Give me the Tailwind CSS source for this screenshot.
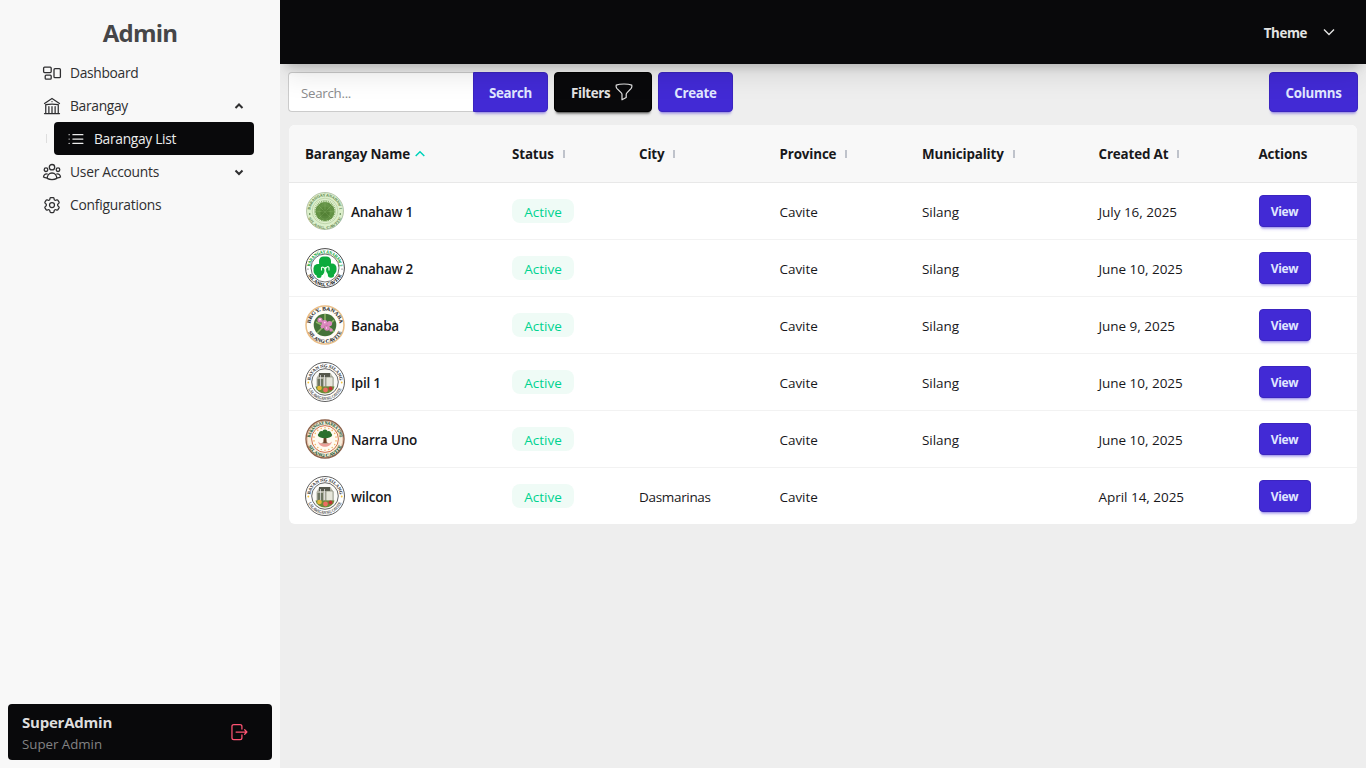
<!DOCTYPE html>
<html lang="en">
<head>
<meta charset="utf-8">
<title>Admin</title>
<script src="https://cdn.jsdelivr.net/npm/@tailwindcss/browser@4"></script>
</head>
<body class="flex h-screen overflow-hidden bg-[#eeeeee] font-['Open_Sans',sans-serif] text-sm text-[#18181b]">

<!-- Sidebar -->
<aside class="relative z-20 flex w-70 shrink-0 flex-col bg-[#f8f8f8] p-2">
  <h1 class="mt-2 text-center text-[24px] leading-[34px] font-bold tracking-[-0.8px] text-[#464648]">Admin</h1>
  <nav class="mt-[6px] ml-[22px] flex w-[224px] flex-col text-[13.800px] text-[#2f2f31]">
    <a class="flex h-[33px] items-center gap-2 px-3">
      <svg class="size-5" viewBox="0 0 20 20" fill="none" stroke="currentColor" stroke-width="1.3"><rect x="1.6" y="4.200" width="7.6" height="5.4" rx="1"/><rect x="3.2" y="12.200" width="6" height="4" rx="1"/><rect x="12" y="5.7" width="6.4" height="9" rx="1"/></svg>
      <span class="tracking-[-0.310px]">Dashboard</span>
    </a>
    <a class="flex h-[33px] items-center gap-2 px-3">
      <svg class="size-5" viewBox="0 0 24 24" fill="none" stroke="currentColor" stroke-width="1.5" stroke-linecap="round" stroke-linejoin="round"><path d="M12 21v-8.25M15.75 21v-8.25M8.25 21v-8.25M3 9l9-6 9 6m-1.500 12V10.332A48.36 48.36 0 0 0 12 9.75c-2.551 0-5.056.2-7.500.582V21M3 21h18M12 6.750h.008v.008H12V6.75Z"/></svg>
      <span class="grow tracking-[-0.310px]">Barangay</span>
      <svg class="mr-[-3px] size-3" viewBox="0 0 12 12" fill="none" stroke="currentColor" stroke-width="2"><path d="M2.500 8L6 4.500 9.500 8"/></svg>
    </a>
    <div class="flex h-[33px] items-center">
      <i class="ml-4 h-[9px] w-px bg-[#dedede]"></i>
      <a class="ml-[7px] flex h-[33px] w-[200px] items-center gap-2 rounded bg-[#09090b] px-3 text-[#ececec]">
        <svg class="size-5" viewBox="0 0 24 24" fill="none" stroke="currentColor" stroke-width="1.5" stroke-linecap="round" stroke-linejoin="round"><path d="M8.250 6.750h12M8.250 12h12m-12 5.250h12M3.750 6.750h.007v.008H3.750V6.750Zm0 5.250h.007v.008H3.750V12Zm0 5.250h.007v.008H3.750v-.008Z"/></svg>
        <span class="tracking-[-0.310px]">Barangay List</span>
      </a>
    </div>
    <a class="flex h-[33px] items-center gap-2 px-3">
      <svg class="size-5" viewBox="0 0 20 20" fill="none" stroke="currentColor" stroke-width="1.3"><circle cx="10" cy="5.200" r="2.700"/><circle cx="4" cy="7.700" r="1.800"/><circle cx="16" cy="7.700" r="1.800"/><path d="M5.200 16.400c0-3 1.800-5.400 4.800-5.400s4.800 2.400 4.800 5.400c-2.600 1.600-7 1.600-9.600 0ZM5.600 12.200c-2.300-.8-3.900.5-4.100 2.800.9.600 2.200.9 3.600.8M14.400 12.200c2.300-.8 3.900.5 4.100 2.800-.9.600-2.200.9-3.600.8"/></svg>
      <span class="grow tracking-[-0.250px]">User Accounts</span>
      <svg class="mr-[-3px] size-3" viewBox="0 0 12 12" fill="none" stroke="currentColor" stroke-width="2"><path d="M2.500 4.500L6 8l3.500-3.500"/></svg>
    </a>
    <a class="flex h-[33px] items-center gap-2 px-3">
      <svg class="size-5" viewBox="0 0 24 24" fill="none" stroke="currentColor" stroke-width="1.5" stroke-linecap="round" stroke-linejoin="round"><path d="M9.594 3.940c.090-.542.560-.940 1.110-.940h2.593c.550 0 1.020.398 1.110.940l.213 1.281c.063.374.313.686.645.870.074.040.147.083.220.127.325.196.720.257 1.075.124l1.217-.456a1.125 1.125 0 0 1 1.370.490l1.296 2.247a1.125 1.125 0 0 1-.260 1.431l-1.003.827c-.293.241-.438.613-.430.992a7.723 7.723 0 0 1 0 .255c-.008.378.137.750.430.991l1.004.827c.424.350.534.955.260 1.430l-1.298 2.247a1.125 1.125 0 0 1-1.369.491l-1.217-.456c-.355-.133-.750-.072-1.076.124a6.470 6.470 0 0 1-.220.128c-.331.183-.581.495-.644.869l-.213 1.281c-.090.543-.560.940-1.110.940h-2.594c-.550 0-1.019-.398-1.110-.940l-.213-1.281c-.062-.374-.312-.686-.644-.870a6.520 6.520 0 0 1-.220-.127c-.325-.196-.720-.257-1.076-.124l-1.217.456a1.125 1.125 0 0 1-1.369-.490l-1.297-2.247a1.125 1.125 0 0 1 .260-1.431l1.004-.827c.292-.240.437-.613.430-.991a6.932 6.932 0 0 1 0-.255c.007-.380-.138-.751-.430-.992l-1.004-.827a1.125 1.125 0 0 1-.260-1.430l1.297-2.247a1.125 1.125 0 0 1 1.370-.491l1.216.456c.356.133.751.072 1.076-.124.072-.044.146-.086.220-.128.332-.183.582-.495.644-.869l.214-1.280Z"/><circle cx="12" cy="12" r="3"/></svg>
      <span class="tracking-[-0.230px]">Configurations</span>
    </a>
  </nav>
  <div class="mt-auto flex h-14 items-center justify-between rounded bg-[#09090b] pr-[23px] pl-[14px]">
    <div>
      <p class="text-[15px] leading-[22px] font-bold tracking-[-0.22px] text-[#dedede]">SuperAdmin</p>
      <p class="pt-px text-[13.300px] leading-[20px] tracking-[-0.020px] text-[#828283]">Super Admin</p>
    </div>
    <svg class="size-5" viewBox="0 0 24 24" fill="none" stroke="#ff5473" stroke-width="1.5" stroke-linecap="round" stroke-linejoin="round"><path d="M15.500 8.500V5.250A2.250 2.250 0 0 0 13.250 3H5.800A2.250 2.250 0 0 0 3.550 5.250v13.500A2.250 2.250 0 0 0 5.800 21h7.450a2.250 2.250 0 0 0 2.250-2.250V15.500M18.800 9.300 21.500 12l-2.700 2.700M21.500 12H8.500"/></svg>
  </div>
</aside>

<div class="flex min-w-0 grow flex-col">
  <!-- Top bar -->
  <header class="relative z-10 flex h-16 shrink-0 items-center justify-end gap-[14px] bg-[#09090b] pr-[29px] text-[#e3e3e3] shadow-[0_20px_25px_-5px_rgba(0,0,0,0.08),0_8px_10px_-6px_rgba(0,0,0,0.22)]">
    <span class="pt-[2px] text-[13.300px] font-bold tracking-[-0.400px]">Theme</span>
    <svg class="size-4" viewBox="0 0 16 16" fill="none" stroke="currentColor" stroke-width="1.400"><path d="M3 5.500l5 5 5-5"/></svg>
  </header>

  <main class="px-2 pt-2">
    <!-- Toolbar -->
    <div class="flex h-10 text-[13.300px] font-bold tracking-[-0.280px] text-[#e0e7ff]">
      <div class="flex h-10 w-[185px] items-center rounded-l border border-r-0 border-[#cbcbcb] bg-white pt-[2px] pl-3 text-[13.300px] font-normal text-[#8b8b8d]">Search...</div>
      <button class="h-10 w-[75px] rounded-r border border-[#3b25c0] bg-[#422ad5] pt-[2px] shadow-[0_3px_2px_-2px_rgba(66,42,213,0.3),0_4px_3px_-2px_rgba(66,42,213,0.3)]">Search</button>
      <button class="ml-[6px] flex h-10 w-[98px] items-center gap-1 rounded border border-black bg-[#09090b] pl-4 text-[#e3e3e3] shadow-[0_3px_2px_-2px_rgba(0,0,0,0.5),0_4px_3px_-2px_rgba(0,0,0,0.3)]"><span class="pt-[2px] tracking-[-0.350px]">Filters</span>
        <svg class="size-5" viewBox="0 0 20 20" fill="none" stroke="currentColor" stroke-width="1.200" stroke-linejoin="round"><path d="M2.200 3.100C4.400 2.300 7 2 10 2s5.600.300 7.800 1.100c.3 1.400.1 2.400-.6 3.200l-4.300 4.600c-.5.500-.7 1-.7 1.700v2.900L8 17.800v-5.200c0-.7-.2-1.200-.7-1.700L2.800 6.300c-.7-.8-.9-1.800-.6-3.200Z"/></svg>
      </button>
      <button class="ml-[6px] h-10 w-[75px] rounded border border-[#3b25c0] bg-[#422ad5] pt-[2px] shadow-[0_3px_2px_-2px_rgba(66,42,213,0.3),0_4px_3px_-2px_rgba(66,42,213,0.3)]">Create</button>
      <button class="ml-auto h-10 w-[89px] rounded border border-[#3b25c0] bg-[#422ad5] pt-[2px] shadow-[0_3px_2px_-2px_rgba(66,42,213,0.3),0_4px_3px_-2px_rgba(66,42,213,0.3)]">Columns</button>
    </div>

    <!-- Table -->
    <div class="mx-px mt-[13px] overflow-hidden rounded-md bg-white text-[13.500px]">
      <div class="grid h-[58px] grid-cols-[207px_127px_140.500px_142.500px_176.500px_160px_1fr] items-center border-b border-[#e8e8e8] bg-[#f8f8f8] text-[13.400px] font-bold tracking-[-0.150px] text-[#18181b] *:flex *:items-center *:gap-[9px] *:pt-[2px] *:pl-4">
        <div><span>Barangay Name</span><svg class="-ml-[4px] size-[10px]" viewBox="0 0 10 10" fill="none" stroke="#00d3bb" stroke-width="1.500"><path d="M.7 7L5 2.700 9.300 7"/></svg></div>
        <div><span>Status</span><i class="-mt-px h-2 w-[2px] bg-[#bfc3cb]"></i></div>
        <div><span>City</span><i class="-mt-px h-2 w-[2px] bg-[#bfc3cb]"></i></div>
        <div><span>Province</span><i class="-mt-px h-2 w-[2px] bg-[#bfc3cb]"></i></div>
        <div><span>Municipality</span><i class="-mt-px h-2 w-[2px] bg-[#bfc3cb]"></i></div>
        <div><span>Created At</span><i class="-mt-px h-2 w-[2px] bg-[#bfc3cb]"></i></div>
        <div><span>Actions</span></div>
      </div>
      <div id="rows"></div>
    </div>
  </main>
</div>

<template id="row">
  <div class="grid h-[57px] grid-cols-[207px_127px_140.500px_142.500px_176.500px_160px_1fr] items-center border-b border-[#f2f2f2] *:pl-4 last:h-[56px] last:border-b-0">
    <div class="flex items-center gap-[6px]"><svg class="seal size-10" viewBox="0 0 40 40"></svg><span class="name pt-[3px] font-semibold tracking-[-0.250px]"></span></div>
    <div><span class="flex h-6 w-[62px] items-center justify-center rounded-lg bg-[#effbf6] pt-[3px] text-[#00d390]">Active</span></div>
    <div class="city pt-[3px] tracking-[-0.320px]"></div>
    <div class="province pt-[3px] tracking-[-0.060px]"></div>
    <div class="municipality pt-[3px] tracking-[-0.060px]"></div>
    <div class="created pt-[3px] tracking-[-0.030px]"></div>
    <div><button class="block h-8 w-[52px] rounded border border-[#3b25c0] bg-[#422ad5] pt-[2px] text-[12px] font-bold tracking-[-0.350px] text-[#e0e7ff] shadow-[0_3px_2px_-2px_rgba(66,42,213,0.3),0_4px_3px_-2px_rgba(66,42,213,0.3)]">View</button></div>
  </div>
</template>

<svg class="hidden">
  <defs>
    <path id="arcTop" d="M5.300 20a14.700 14.700 0 0 1 29.400 0"/>
    <path id="arcBottom" d="M2 20a18 18 0 0 0 36 0"/>
  </defs>
</svg>

<script>
  const ring = (top, bottom, color, bottomColor, size = 4.2) => `
    <text font-family="Liberation Serif" font-weight="bold" font-size="${size}" fill="${color}" stroke="${color}" stroke-width=".1"><textPath href="#arcTop" startOffset="50%" text-anchor="middle" textLength="43" lengthAdjust="spacingAndGlyphs">${top}</textPath></text>
    <text font-family="Liberation Serif" font-weight="bold" font-size="${size}" fill="${bottomColor}" stroke="${bottomColor}" stroke-width=".1"><textPath href="#arcBottom" startOffset="50%" text-anchor="middle" textLength="42" lengthAdjust="spacingAndGlyphs">${bottom}</textPath></text>`;
  let rays = '';
  for (let i = 0; i < 36; i++) {
    const a = i * Math.PI / 18;
    rays += `M${(20 + 5 * Math.sin(a)).toFixed(1)} ${(20.5 - 5 * Math.cos(a)).toFixed(1)}L${(20 + 11 * Math.sin(a)).toFixed(1)} ${(20 - 11 * Math.cos(a)).toFixed(1)}`;
  }
  let dots = '';
  for (let i = 0; i < 18; i++) {
    const a = i * Math.PI / 9;
    dots += `<circle cx="${(20 + 11.200 * Math.sin(a)).toFixed(1)}" cy="${(20 - 11.200 * Math.cos(a)).toFixed(1)}" r=".8" fill="#f1b96b"/>`;
  }
  const silang = `<circle cx="20" cy="20" r="19.500" fill="#fff" stroke="#4d4d4d" stroke-width=".9"/>${ring('BAYAN NG SILANG', 'LALAWIGAN NG CAVITE', '#444', '#666', 4.400)}
    <circle cx="20" cy="20" r="13.300" fill="#fafaf7" stroke="#555" stroke-width=".9"/>
    <path d="M11.500 28V16l3-5h11l3 5v12Z" fill="#b4b4a6"/><path d="M14 11h11v4H14Z" fill="#56584c"/><path d="M21 15h7v10h-7Z" fill="#e6e6da" stroke="#77786a" stroke-width=".6"/><path d="M12.500 17h5.500v8h-5.500Z" fill="#6d7560"/><path d="M15.500 13v12M19.500 13v11" stroke="#eee" stroke-width=".7"/>
    <path d="M10.500 24.500h19c-1 4-4.500 7-9.500 7s-8.500-3-9.500-7Z" fill="#6c8b36"/><circle cx="14.500" cy="26" r="2.300" fill="#e5b93b"/><circle cx="20.500" cy="28" r="2.400" fill="#ed6e62"/><circle cx="25.500" cy="26.500" r="2" fill="#be3533"/><circle cx="3.300" cy="20.500" r=".9" fill="#f4c33d"/><circle cx="36.700" cy="20.500" r=".9" fill="#f4c33d"/>`;
  const seals = {
    anahaw1: `<circle cx="20" cy="20" r="18.500" fill="#dcefcb" stroke="#a7b99a" stroke-width=".8"/>${ring('BARANGAY ANAHAW 1', 'SILANG, CAVITE', '#668c55', '#7d9a6b', 3.800)}
      <circle cx="20" cy="20" r="12.800" fill="#e0f0cf" stroke="#8fae79" stroke-width=".4"/><circle cx="20" cy="20.500" r="9.500" fill="#5b8a3c"/><path d="${rays}" stroke="#6f9c50" stroke-width=".7"/><path d="M20 21L13 14M20 21L20 11M20 21L27 14M20 21L11 20M20 21L29 20M20 21L14 27M20 21L26 27" stroke="#86b064" stroke-width=".5"/><circle cx="20" cy="23" r="4.500" fill="#426e29" opacity=".3"/><circle cx="4.700" cy="23" r=".8" fill="#43703a"/><circle cx="35.300" cy="23" r=".8" fill="#43703a"/>`,
    anahaw2: `<circle cx="20" cy="20" r="19.400" fill="#fff" stroke="#333" stroke-width=".9"/>${ring('BARANGAY ANAHAW 2', 'SILANG, CAVITE', '#12a63c', '#111', 4.500)}
      <circle cx="20" cy="20" r="14" fill="#fff" stroke="#333" stroke-width=".7"/>
      <g fill="#0cab3d"><rect x="14" y="8.500" width="12" height="11" rx="4.500"/><rect x="8.500" y="16" width="11" height="11.500" rx="4.500"/><rect x="21" y="15.500" width="10.500" height="11" rx="4.500"/><circle cx="26" cy="26.500" r="3.200"/><circle cx="14" cy="27.500" r="2.500"/></g>
      <path d="M20 31c-1.500-4 1.500-6 .5-12M20.500 22c-1-2.500-2.500-3.500-4-2.500v3M20.500 21c1-2.500 2.500-3 3.500-1.500v3" fill="none" stroke="#e8ffe9" stroke-width="1.100"/><circle cx="3" cy="21" r=".6" fill="#333"/><circle cx="37" cy="21" r=".6" fill="#333"/>`,
    banaba: `<circle cx="20" cy="20" r="19" fill="#fffdf8" stroke="#e9bd86" stroke-width="1.500"/>${ring('BRGY. BANABA', 'SILANG CAVITE', '#333', '#333', 5)}
      <circle cx="20" cy="20" r="11.300" fill="#447338"/><path d="M11 17l8 4-7 7M29 15l-6 6 6 6M20 9v8" stroke="#90b667" stroke-width="1.500" fill="none"/>
      <g fill="#dc86be"><circle cx="15" cy="15" r="2.600"/><circle cx="19.500" cy="18" r="3"/><circle cx="24.500" cy="18.500" r="2.600"/><circle cx="22" cy="23" r="2.800"/><circle cx="17.500" cy="21.500" r="2"/><circle cx="26" cy="25" r="1.700"/></g><path d="M14 14.500h2M19 17.500h1.500M21 23h1" stroke="#ffd5ef" stroke-width="1.300"/>`,
    silang,
    narra: `<circle cx="20" cy="20" r="19" fill="#f7eddb" stroke="#8a6049" stroke-width="1.400"/><circle cx="20" cy="20" r="17.900" fill="none" stroke="#cb866b" stroke-width=".5"/>${ring('BARANGAY NARRA UNO', 'SILANG CAVITE', '#205b37', '#205b37', 4.500)}
      <circle cx="20" cy="20" r="13.400" fill="#fffaf0" stroke="#ce7253" stroke-width="1"/>${dots}
      <path d="M18.800 17h2.400l.5 6.500 3 1h-9.400l3-1Z" fill="#6b4025"/><g fill="#2b702d"><ellipse cx="20" cy="16" rx="7.200" ry="3.300"/><circle cx="16.500" cy="14.500" r="2.500"/><circle cx="23.500" cy="14.500" r="2.500"/><circle cx="20" cy="13" r="2.600"/></g><path d="M13 22.500c1.500 7 12.500 7 14 0-2 3.200-12 3.200-14 0Z" fill="#ec9f98"/>`
  };
  const data = [
    ['anahaw1', 'Anahaw 1', '', 'Cavite', 'Silang', 'July 16, 2025'],
    ['anahaw2', 'Anahaw 2', '', 'Cavite', 'Silang', 'June 10, 2025'],
    ['banaba', 'Banaba', '', 'Cavite', 'Silang', 'June 9, 2025'],
    ['silang', 'Ipil 1', '', 'Cavite', 'Silang', 'June 10, 2025'],
    ['narra', 'Narra Uno', '', 'Cavite', 'Silang', 'June 10, 2025'],
    ['silang', 'wilcon', 'Dasmarinas', 'Cavite', '', 'April 14, 2025']
  ];
  const rows = document.getElementById('rows');
  const template = document.getElementById('row');
  for (const [seal, ...values] of data) {
    const node = template.content.cloneNode(true);
    node.querySelector('.seal').innerHTML = seals[seal];
    ['name', 'city', 'province', 'municipality', 'created'].forEach((key, i) => {
      node.querySelector('.' + key).textContent = values[i];
    });
    rows.append(node);
  }
</script>
</body>
</html>
